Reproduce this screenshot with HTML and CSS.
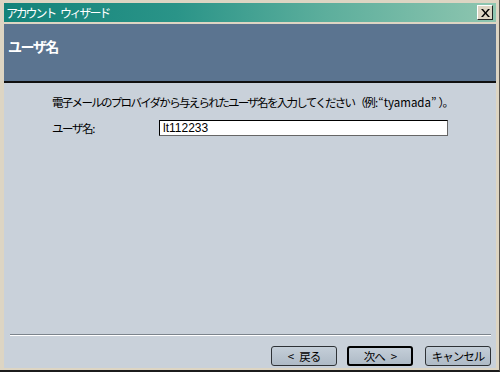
FILE: index.html
```html
<!DOCTYPE html>
<html lang="ja">
  <head>
    <meta charset="UTF-8" />
    <title>アカウント ウィザード</title>
    <link rel="stylesheet" href="styles.css">
  </head>
  <body>
    <div class="window">
      <!-- タイトルバー -->
      <div class="titlebar">
        <span class="title">アカウント<span class="word">ウィザード</span></span>
        <button class="close">
          <svg width="9" height="8" viewBox="0 0 9 8">
            <path d="M0 0h2l2.5 3 2.5-3h2L5.5 4 9 8H7L4.5 5 2 8H0l3.5-4z" fill="#000"/>
          </svg>
        </button>
      </div>

      <!-- ヘッダー -->
      <div class="header">
        <h1>ユーザ名</h1>
      </div>

      <!-- 本文 -->
      <div class="content">
        <p class="hint">電子メールのプロバイダから与えられたユーザ名を入力してください（例<span class="latin">:“tyamada”</span>）。</p>
        <label class="field">
          <span>ユーザ名:</span>
          <input type="text" value="lt112233" />
        </label>
      </div>

      <div class="separator"></div>

      <!-- ボタン -->
      <div class="buttons">
        <button class="btn"><span class="arrow">&lt;</span>戻る</button>
        <button class="btn default">次へ<span class="arrow after">&gt;</span></button>
        <button class="btn cancel">キャンセル</button>
      </div>
    </div>
  </body>
</html>
```

FILE: styles.css
```css
body {
  margin: 0;
  font-family: "Noto Sans CJK JP", "Liberation Sans", sans-serif;
  font-size: 11px;
}

.window {
  box-sizing: border-box;
  width: 500px;
  height: 372px;
  background-color: #ddd5c3;
  border-right: 1px solid #5a5650;
  border-bottom: 2px solid #1c1c1c;
  padding: 3px 3px 2px 4px;
  display: flex;
  flex-direction: column;
}

.titlebar {
  height: 19px;
  display: flex;
  align-items: center;
  justify-content: space-between;
  padding: 0 3px 0 2px;
  background: linear-gradient(to right, #13837a, #2a9488 35%, #5cae9c 65%, #8fc6b0);
  border-bottom: 2px solid #ddd5c3;
}

.title {
  color: #fff;
  font-size: 12px;
  line-height: 19px;
  letter-spacing: -2.2px;
}

.title .word {
  margin-left: 5px;
}

.close {
  width: 16px;
  height: 15px;
  padding: 0;
  display: flex;
  align-items: center;
  justify-content: center;
  background-color: #ddd5c3;
  border: 1px solid;
  border-color: #fff #222 #222 #fff;
}

.header {
  height: 57px;
  background-color: #5b7490;
  border-bottom: 2px solid #101010;
  padding: 0 4px;
}

.header h1 {
  margin: 0;
  padding-top: 12px;
  font-size: 14px;
  font-weight: bold;
  letter-spacing: -1.5px;
  color: #fff;
}

.content {
  flex: 1;
  background-color: #c9d1da;
  padding: 11px 0 0 48px;
}

.hint {
  margin: 0 0 10px;
  line-height: 16px;
  white-space: nowrap;
  font-size: 11.5px;
  letter-spacing: -1.7px;
}

.hint .latin {
  letter-spacing: 0;
  padding: 0 2px 0 1px;
}

.field {
  display: flex;
  align-items: center;
}

.field span {
  width: 107px;
  font-size: 11.5px;
  letter-spacing: -1.4px;
}

.field input {
  box-sizing: border-box;
  width: 289px;
  height: 16px;
  margin: 0;
  padding: 0 3px;
  border: 1px solid #000;
  border-right-color: #666;
  border-bottom-color: #666;
  font-family: "Liberation Sans", sans-serif;
  font-size: 12px;
  background-color: #fff;
}

.separator {
  background-color: #c9d1da;
  padding: 0 5px 0 6px;
  height: 2px;
  border-top: 9px solid #c9d1da;
}

.separator::before {
  content: "";
  display: block;
  height: 1px;
  background-color: #7c848c;
  border-bottom: 1px solid #fff;
}

.buttons {
  height: 32px;
  box-sizing: border-box;
  background-color: #c9d1da;
  display: flex;
  justify-content: flex-end;
  align-items: flex-start;
  gap: 10px;
  padding: 10px 5px 0 0;
}

.btn {
  box-sizing: border-box;
  width: 66px;
  height: 20px;
  padding: 0;
  font-family: "Noto Sans CJK JP", sans-serif;
  font-size: 11.5px;
  letter-spacing: -1px;
  color: #000;
  background: linear-gradient(#c4ced8, #aebac6);
  border: 1px solid #2e3236;
  border-radius: 3px;
}

.btn .arrow {
  margin-right: 6px;
}

.btn .arrow.after {
  margin: 0 0 0 6px;
}

.btn.default {
  border: 2px solid #000;
}

.btn.cancel {
  margin-left: 2px;
}
```
